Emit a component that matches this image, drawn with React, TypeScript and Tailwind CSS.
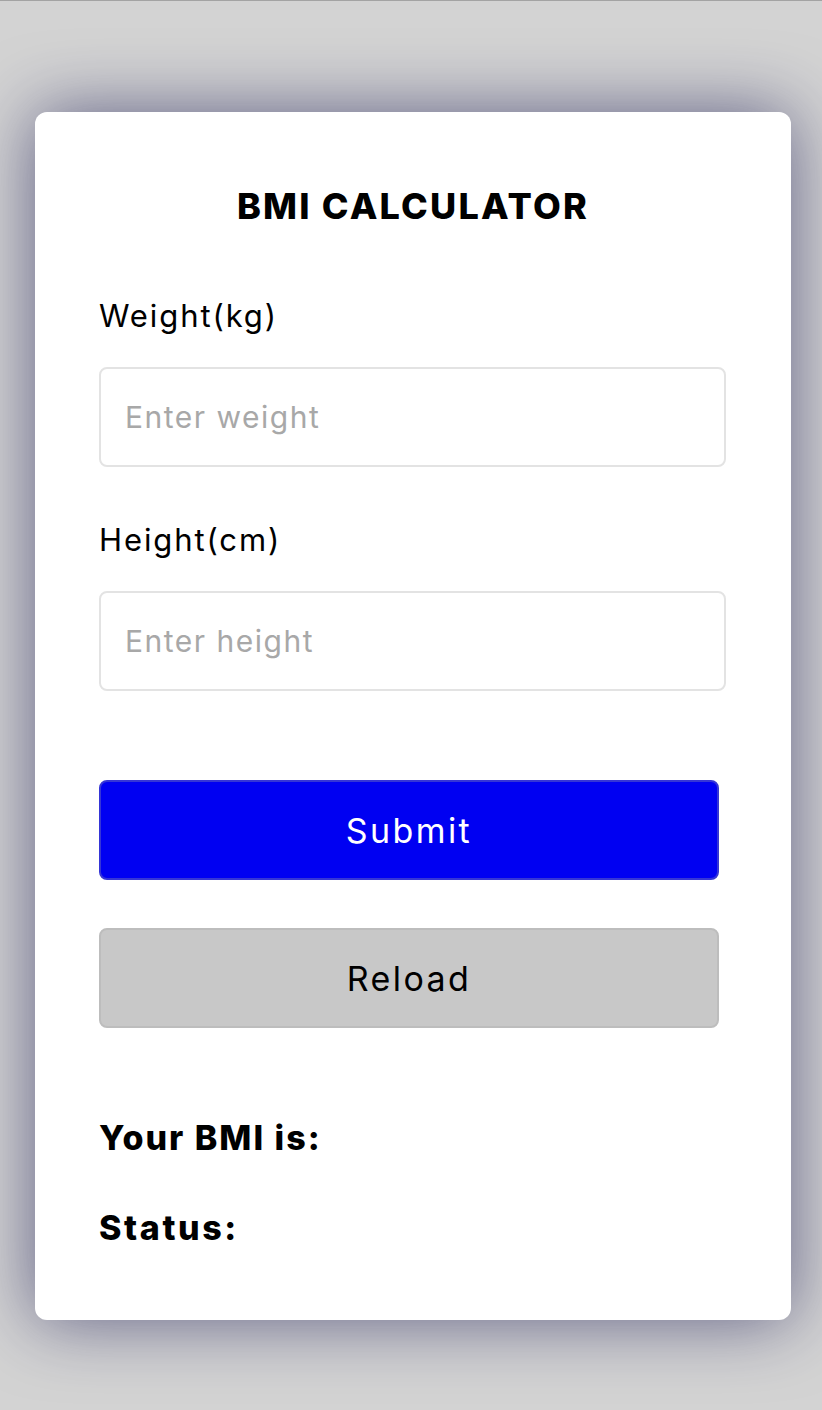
import React from 'react';

const fieldLabel = "block text-[31px] leading-[36px] tracking-[1.9px] text-black";
const fieldInput =
  "block w-[627px] h-[100px] rounded-[8px] border-2 border-[#e3e3e3] bg-white px-[24px] text-[30px] tracking-[1.5px] text-black placeholder:text-[#a8a8a8] outline-none";

export default function App() {
  return (
    <div className="min-h-[1410px] bg-[#d3d3d3] border-t border-[#a3a3a3] pt-[111px] font-['Inter',sans-serif]">
      <div className="ml-[35px] w-[756px] rounded-[12px] bg-white px-[64px] pt-[72px] pb-[72px] shadow-[0_0_70px_0px_rgba(20,20,80,0.6)]">
        {/* Title */}
        <h1 className="text-center text-[36px] leading-[44px] font-extrabold tracking-[2.2px] text-black">BMI CALCULATOR</h1>

        {/* Weight */}
        <label className={`${fieldLabel} mt-[70px]`}>Weight(kg)</label>
        <input type="text" placeholder="Enter weight" className={`${fieldInput} mt-[33px]`} />

        {/* Height */}
        <label className={`${fieldLabel} mt-[55px]`}>Height(cm)</label>
        <input type="text" placeholder="Enter height" className={`${fieldInput} mt-[33px]`} />

        {/* Buttons */}
        <button className="mt-[89px] block w-[620px] h-[100px] rounded-[8px] border-2 border-[#3535d6] bg-[#0000f2] text-[34px] tracking-[2.4px] text-white">
          Submit
        </button>
        <button className="mt-[48px] block w-[620px] h-[100px] rounded-[8px] border-2 border-[#bdbdbd] bg-[#c8c8c8] text-[34px] tracking-[2.4px] text-black">
          Reload
        </button>

        {/* Results */}
        <p className="mt-[90px] text-[34px] leading-[40px] font-extrabold tracking-[2px] text-black">Your BMI is:</p>
        <p className="mt-[50px] text-[34px] leading-[40px] font-extrabold tracking-[2.6px] text-black">Status:</p>
      </div>
    </div>
  );
}
